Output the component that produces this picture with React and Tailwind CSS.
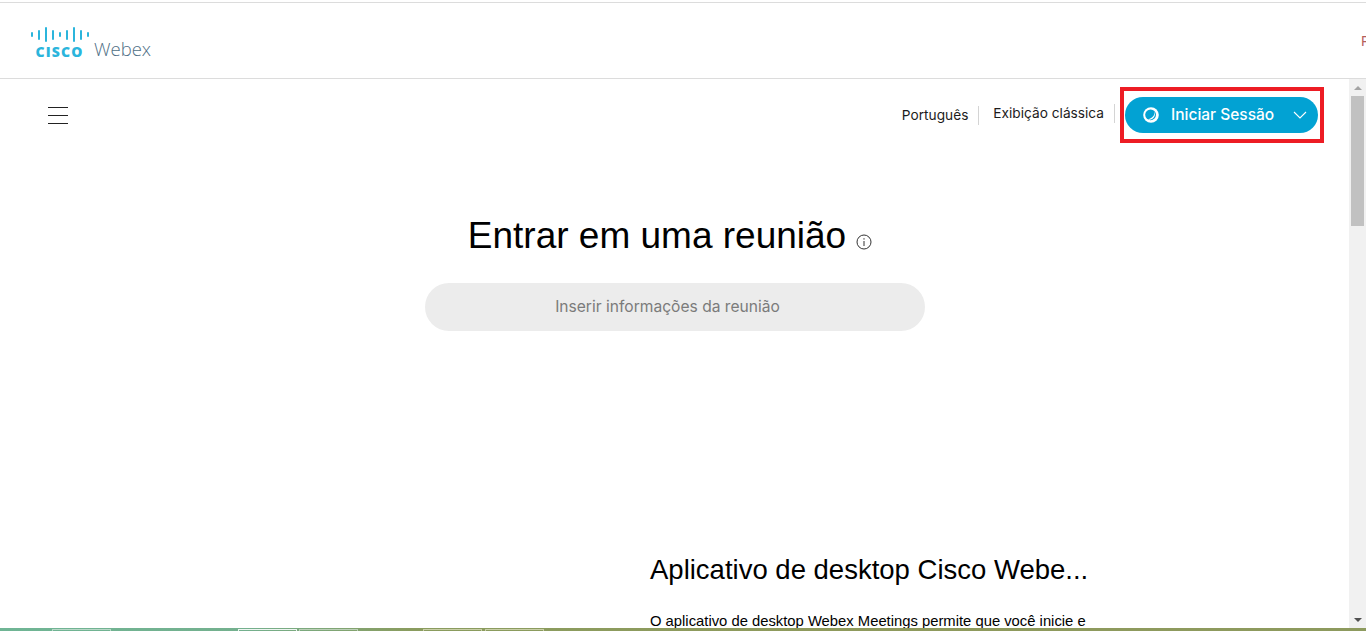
import React from "react";

const barHeights = [5, 10, 15, 10, 5, 10, 15, 10, 5];

const CiscoBars = () => (
  <div className="flex items-center gap-[5px] h-[15px]">
    {barHeights.map((h, i) => (
      <span key={i} className="block w-[2px] rounded-full bg-[#2bb5dc]" style={{ height: h }} />
    ))}
  </div>
);

const SessionIcon = () => (
  <svg width="16" height="16" viewBox="0 0 16 16" fill="none">
    <circle cx="8" cy="8" r="7.8" fill="#fff" />
    <circle cx="7.6" cy="7.8" r="5.4" fill="#02a2d3" />
    <path d="M11.6 3.6C12.4 7.4 9.8 11.2 5 12.4C8.6 13.6 13.6 10.6 11.6 3.6Z" fill="#fff" />
  </svg>
);

const Chevron = () => (
  <svg width="14" height="8" viewBox="0 0 14 8" fill="none" stroke="#fff" strokeWidth="1.1">
    <path d="M1 1L7 7L13 1" />
  </svg>
);

const InfoIcon = () => (
  <svg width="16" height="16" viewBox="0 0 16 16" fill="none" stroke="#333">
    <circle cx="8" cy="8" r="7" />
    <path d="M8 7V12M8 4.2V5.6" strokeWidth="1" />
  </svg>
);

const Scrollbar = () => (
  <div className="w-[17px] shrink-0 flex flex-col items-center bg-[#f1f1f1]">
    <div className="h-[17px] flex items-center justify-center">
      <span className="block w-0 h-0 border-x-[4px] border-x-transparent border-b-[4px] border-b-[#a3a3a3]" />
    </div>
    <div className="w-[13px] h-[130px] bg-[#c1c1c1]" />
    <div className="flex-1" />
    <div className="h-[17px] flex items-center justify-center">
      <span className="block w-0 h-0 border-x-[4px] border-x-transparent border-t-[4px] border-t-[#505050]" />
    </div>
  </div>
);

const TaskTab = ({ className }) => (
  <span className={`block h-[2px] mt-px w-[59px] shrink-0 border-t border-x ${className}`} />
);

const App = () => {
  return (
    <div className="w-[1366px] h-[631px] overflow-hidden flex flex-col bg-white font-['Liberation_Sans',sans-serif] text-black">
      <div className="h-[3px] shrink-0 border-b border-[#dcdcdc]" />

      <header className="h-[76px] shrink-0 border-b border-[#dcdcdc] flex items-start justify-between overflow-hidden">
        <div className="flex items-start pl-[31px] pt-[24px]">
          <div className="flex flex-col items-center w-[57px]">
            <CiscoBars />
            <span className="font-['Open_Sans',sans-serif] font-extrabold uppercase text-[#2bb5dc] text-[14px] leading-[15px] tracking-[1.1px] mt-[2px]">cisco</span>
          </div>
          <span className="ml-[6px] mt-[10px] font-['Open_Sans',sans-serif] font-light text-[#4f6f86] text-[18.5px] leading-[24px]">Webex</span>
        </div>
        <span className="mt-[29px] w-[5px] overflow-hidden text-[14px] leading-[18px] text-[#b5605c]">F</span>
      </header>

      <div className="flex-1 min-h-0 flex">
        <main className="flex-1 min-w-0 overflow-hidden flex flex-col">
          <div className="flex items-center justify-between pt-[8px] pl-[48px] pr-[25px]">
            <div className="flex flex-col gap-[7px] w-[20px]">
              <span className="block h-px bg-[#222]" />
              <span className="block h-px bg-[#222]" />
              <span className="block h-px bg-[#222]" />
            </div>
            <div className="flex items-center font-['Inter',sans-serif] text-[13.7px] text-[#1c1c1c]">
              <span className="pr-[10px] border-r border-[#d4d4d4] leading-[19px] mt-[1px]">Português</span>
              <span className="pl-[14px] pr-[10px] border-r border-[#d4d4d4] leading-[19px] -mt-[3px]">Exibição clássica</span>
              <div className="ml-[5px] border-[4px] border-[#ed1c24] w-[204px] h-[56px] flex items-start justify-start pt-[6px] pl-px">
                <button className="w-[193px] h-[36px] rounded-full bg-[#02a2d3] flex items-center pl-[18px] pr-[11px] text-white font-medium text-[15.5px]">
                  <SessionIcon />
                  <span className="ml-[12px] -mt-[1px]">Iniciar Sessão</span>
                  <span className="ml-auto flex"><Chevron /></span>
                </button>
              </div>
            </div>
          </div>

          <div className="flex flex-col items-center pt-[71px] pl-[1px]">
            <div className="flex items-end gap-[10px] mr-[10px]">
              <h1 className="text-[37px] leading-[44px]">Entrar em uma reunião</h1>
              <span className="mb-[8px]"><InfoIcon /></span>
            </div>
            <div className="mt-[25px] w-[500px] h-[48px] rounded-full bg-[#ececec] flex items-center justify-center pr-[15px] font-['Inter',sans-serif] text-[15.6px] text-[#7b7b7b]">
              Inserir informações da reunião
            </div>
          </div>

          <div className="pl-[650px] pt-[222px]">
            <h2 className="text-[27.5px] leading-[34px]">Aplicativo de desktop Cisco Webe...</h2>
            <p className="mt-[24px] text-[14.8px] leading-[20px] w-[450px]">
              O aplicativo de desktop Webex Meetings permite que você inicie e
            </p>
          </div>
        </main>
        <Scrollbar />
      </div>

      <div className="h-[3px] shrink-0 flex overflow-hidden bg-[linear-gradient(90deg,#6fb595_0%,#74b08e_18%,#8a9c5f_30%,#8f9a5c_60%,#8d9a5e_100%)]">
        <TaskTab className="ml-[52px] border-[#b9d8c8]" />
        <TaskTab className="ml-[127px] border-[#eef5f1]" />
        <TaskTab className="ml-[2px] border-[#bcd0b8]" />
        <TaskTab className="ml-[65px] border-[#c9cfa8]" />
        <TaskTab className="ml-[3px] border-[#c9cfa8]" />
      </div>
    </div>
  );
};

export default App;
